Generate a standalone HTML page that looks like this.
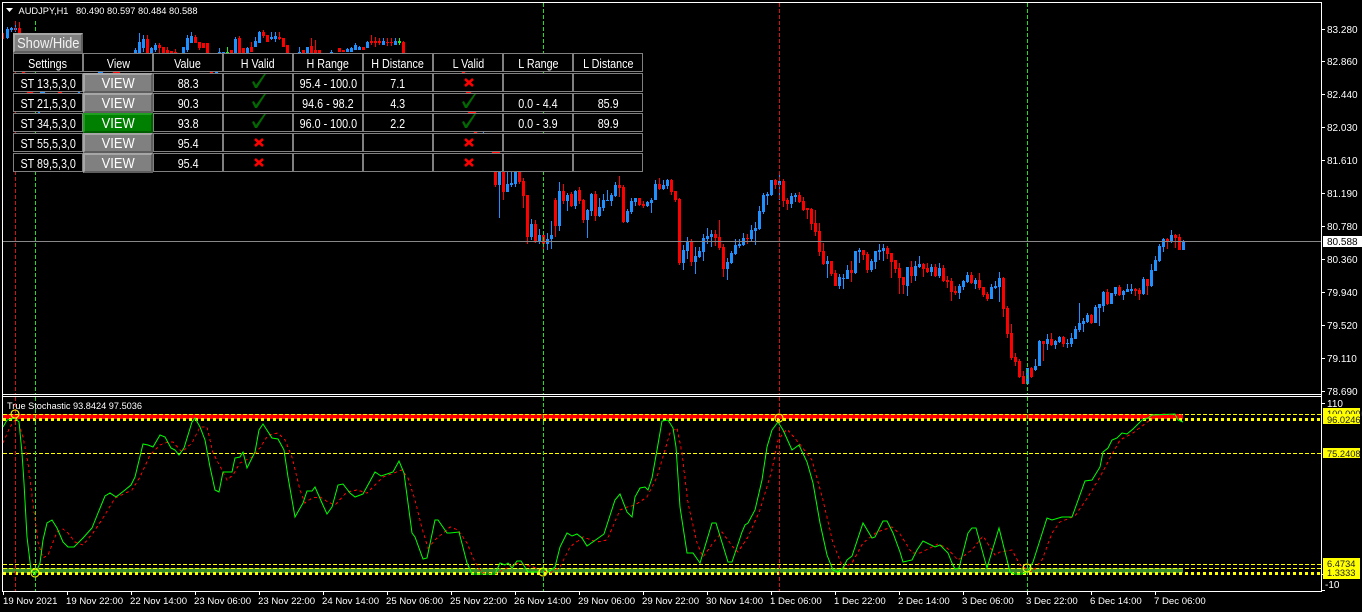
<!DOCTYPE html>
<html lang="en">
<head>
<meta charset="utf-8">
<title>AUDJPY,H1</title>
<style>
html,body{margin:0;padding:0;background:#000;}
body{width:1362px;height:612px;overflow:hidden;position:relative;font-family:"Liberation Sans",Arial,sans-serif;}
svg.chart{position:absolute;left:0;top:0;}
svg.chart text{font-family:"Liberation Sans",Arial,sans-serif;font-size:10px;fill:#fff;}
svg.chart text.y{font-size:9.3px;fill:#222;}
.tbl{position:absolute;left:13px;top:53px;display:grid;grid-template-columns:repeat(9,70px);grid-auto-rows:20px;}
.c{box-sizing:border-box;height:19px;border:1px solid #808080;background:#000;color:#fff;font-size:12.5px;line-height:21px;text-align:center;position:relative;white-space:nowrap;}
.c span,.b span,.sh span{display:inline-block;transform:scaleX(.86);transform-origin:50% 50%;margin:0 -12px;}
.b{box-sizing:border-box;height:20px;border:2px solid;border-color:#a6a6a6 #5e5e5e #5e5e5e #a6a6a6;background:#808080;color:#fff;font-size:15px;line-height:18px;text-align:center;white-space:nowrap;}
.b.g{background:#008000;border-color:#1f9f1f #005e00 #005e00 #1f9f1f;}
.sh{position:absolute;left:13px;top:33px;width:70px;height:20px;box-sizing:border-box;border:2px solid;border-color:#a6a6a6 #5e5e5e #5e5e5e #a6a6a6;background:#808080;color:#f2f2f2;font-size:15px;line-height:18px;text-align:center;white-space:nowrap;}
.c svg{position:absolute;left:0;top:0;}
</style>
</head>
<body>
<svg class="chart" width="1362" height="612" viewBox="0 0 1362 612" xmlns="http://www.w3.org/2000/svg">
<rect width="1362" height="612" fill="#000"/>

<!-- candles main -->
<g fill="none" shape-rendering="crispEdges">
<path stroke="#ff0000" stroke-width="1" d="M3.5 33V39M19.5 22V33M147.5 35V53M159.5 43V53M163.5 47V53M167.5 47V53M171.5 51V53M175.5 49V53M195.5 35V43M199.5 42V50M203.5 43V48M207.5 43V53M231.5 50V53M239.5 36V53M243.5 48V53M251.5 42V52M263.5 30V38M267.5 35V42M279.5 32V40M283.5 38V47M287.5 45V53M303.5 50V53M311.5 38V53M315.5 40V53M319.5 50V53M339.5 48V52M343.5 50V52M363.5 47V50M371.5 35V45M375.5 37V47M379.5 38V45M387.5 38V46M391.5 38V46M403.5 41V53
M495.5 172V187M503.5 172V200M519.5 172V184M523.5 178V208M527.5 195V244M535.5 220V243M543.5 233V252M555.5 198V237M563.5 184V204M571.5 192V207M579.5 187V204M583.5 199V223M595.5 191V221M619.5 176V197M623.5 185V223M639.5 198V206M643.5 201V208M659.5 178V190M671.5 179V195M675.5 191V202M679.5 198V265M691.5 239V266M715.5 230V246M719.5 220V250M723.5 244V277M747.5 234V244M775.5 179V189M783.5 179V207M787.5 198V210M799.5 192V203M803.5 197V211M807.5 208V219M811.5 208V230M815.5 210V236M819.5 223V256M823.5 243V265M831.5 261V276M835.5 270V286M851.5 261V282M863.5 250V260M867.5 252V273
M887.5 246V259M891.5 253V278M895.5 260V273M899.5 263V294M903.5 277V294M911.5 261V283M923.5 263V277M927.5 263V273M935.5 264V277M943.5 265V282M947.5 276V288M951.5 278V301M955.5 286V295M971.5 272V284M979.5 273V290M983.5 287V297M987.5 292V301M1003.5 277V317M1007.5 306V338M1011.5 324V360M1015.5 353V366M1019.5 359V378M1023.5 371V384M1031.5 367V378M1043.5 341V361M1051.5 333V346M1063.5 336V347M1091.5 314V324M1107.5 289V305M1119.5 285V296M1135.5 288V296M1139.5 288V300M1147.5 279V295M1167.5 238V249M1175.5 234V248M1179.5 234V250"/>
<path stroke="#ff0000" stroke-width="3" d="M19.5 28V33M147.5 39V53M159.5 45V48M163.5 47V53M167.5 50V53M171.5 51V53M175.5 52V53M195.5 37V43M199.5 42V48M203.5 43V48M207.5 43V53M231.5 50V53M239.5 38V53M243.5 48V53M251.5 47V52M263.5 32V36M267.5 35V42M279.5 37V39M283.5 38V47M287.5 45V53M303.5 50V53M311.5 46V53M315.5 50V53M319.5 50V53M339.5 48V52M343.5 50V52M363.5 47V50M371.5 41V43M375.5 41V43M379.5 41V43M387.5 42V43M391.5 42V43M403.5 42V53
M495.5 172V185M503.5 172V192M519.5 172V182M523.5 181V196M527.5 195V237M535.5 224V242M543.5 235V244M555.5 200V226M563.5 191V201M571.5 194V206M579.5 190V201M583.5 200V220M595.5 194V216M619.5 185V188M623.5 187V222M639.5 198V205M643.5 204V206M659.5 184V189M671.5 180V192M675.5 191V200M679.5 199V263M691.5 242V262M715.5 234V238M719.5 237V248M723.5 247V269M747.5 238V239M775.5 180V185M783.5 181V201M787.5 200V204M799.5 195V202M803.5 201V210M807.5 208V210M811.5 209V224M815.5 223V232M819.5 231V252M823.5 251V264M831.5 261V274M835.5 273V286M851.5 270V273M863.5 250V255M867.5 254V270
M887.5 248V254M891.5 253V262M895.5 260V269M899.5 268V278M903.5 277V285M911.5 267V276M923.5 264V269M927.5 268V272M935.5 267V276M943.5 268V281M947.5 280V282M951.5 281V292M955.5 291V293M971.5 275V283M979.5 280V288M983.5 287V295M987.5 294V299M1003.5 278V309M1007.5 308V334M1011.5 333V358M1015.5 357V362M1019.5 361V377M1023.5 376V384M1031.5 368V377M1043.5 341V344M1051.5 339V345M1063.5 337V344M1091.5 315V323M1107.5 292V304M1119.5 287V295M1135.5 289V291M1139.5 290V294M1147.5 279V286M1167.5 239V241M1175.5 235V238M1179.5 237V250"/>
<path stroke="#1e90ff" stroke-width="1" d="M7.5 27V39M11.5 27V32M15.5 22V32M135.5 48V53M139.5 33V53M143.5 35V52M151.5 47V53M155.5 43V52M183.5 47V53M187.5 35V52M191.5 32V43M219.5 48V53M223.5 52V53M235.5 37V53M247.5 47V53M255.5 37V47M259.5 31V43M271.5 32V40M275.5 32V42M299.5 47V53M307.5 47V53M331.5 50V53M347.5 48V52M351.5 47V52M355.5 43V50M359.5 46V50M367.5 41V48M383.5 38V45M395.5 38V45
M499.5 172V218M507.5 172V192M511.5 172V187M515.5 172V187M531.5 219V240M539.5 229V244M547.5 233V250M551.5 221V249M559.5 182V231M567.5 193V211M575.5 190V209M587.5 209V238M591.5 193V216M599.5 198V217M603.5 194V211M607.5 190V201M611.5 193V206M615.5 182V197M627.5 209V223M631.5 198V214M635.5 198V206M647.5 201V207M651.5 198V213M655.5 180V200M663.5 180V190M667.5 179V189M683.5 245V270M687.5 237V259M695.5 247V274M699.5 247V258M703.5 234V261M707.5 228V244M711.5 230V247M727.5 258V280M731.5 251V264M735.5 239V255M739.5 239V248M743.5 233V246M751.5 225V242M755.5 222V245M759.5 206V230M763.5 193V214M767.5 192V205M771.5 180V196M779.5 171V200M791.5 193V208M795.5 193V202M827.5 256V278M839.5 274V289M843.5 274V289M847.5 265V279M855.5 251V274M859.5 248V263M871.5 259V272M875.5 251V269
M879.5 244V260M883.5 244V261M907.5 267V296M915.5 261V281M919.5 256V268M931.5 264V276M939.5 263V278M959.5 284V299M963.5 280V290M967.5 272V283M975.5 278V289M991.5 284V299M995.5 281V289M999.5 272V302M1027.5 368V385M1035.5 359V371M1039.5 340V366M1047.5 334V350M1055.5 340V349M1059.5 336V343M1067.5 339V348M1071.5 333V347M1075.5 326V339M1079.5 303V332M1083.5 318V332M1087.5 313V323M1095.5 305V323M1099.5 304V326M1103.5 291V312M1111.5 293V304M1115.5 287V296M1123.5 290V300M1127.5 284V292M1131.5 284V294M1143.5 277V295M1151.5 264V287M1155.5 256V271M1159.5 244V262M1163.5 238V252M1171.5 230V243M1183.5 240V250"/>
<path stroke="#1e90ff" stroke-width="3" d="M7.5 29V38M11.5 28V30M15.5 28V30M135.5 50V53M139.5 42V53M143.5 39V48M151.5 48V53M155.5 45V50M183.5 47V53M187.5 38V50M191.5 36V43M219.5 52V53M223.5 52V53M235.5 39V53M247.5 48V53M255.5 41V47M259.5 32V43M271.5 37V39M275.5 36V39M299.5 52V53M307.5 47V53M331.5 52V53M347.5 49V52M351.5 48V52M355.5 45V50M359.5 47V50M367.5 42V48M383.5 41V45M395.5 41V45
M499.5 172V185M507.5 184V192M511.5 183V185M515.5 172V184M531.5 224V237M539.5 235V242M547.5 239V244M551.5 235V239M559.5 191V226M567.5 195V201M575.5 191V206M587.5 210V220M591.5 194V211M599.5 207V216M603.5 200V208M607.5 200V201M611.5 195V201M615.5 185V196M627.5 211V222M631.5 201V212M635.5 198V202M647.5 202V206M651.5 200V203M655.5 184V200M663.5 185V189M667.5 180V186M683.5 250V263M687.5 241V251M695.5 256V262M699.5 251V257M703.5 238V252M707.5 236V239M711.5 234V237M727.5 262V269M731.5 253V263M735.5 245V254M739.5 244V246M743.5 238V245M751.5 230V239M755.5 228V231M759.5 211V229M763.5 195V212M767.5 194V196M771.5 180V195M779.5 181V185M791.5 196V204M795.5 195V197M827.5 261V264M839.5 277V286M843.5 278V279M847.5 270V279M855.5 251V273M859.5 250V252M871.5 261V270M875.5 251V262
M879.5 250V252M883.5 248V251M907.5 267V286M915.5 266V276M919.5 264V267M931.5 267V272M939.5 268V276M959.5 286V293M963.5 281V287M967.5 275V282M975.5 280V284M991.5 287V299M995.5 286V288M999.5 278V287M1027.5 368V384M1035.5 366V370M1039.5 341V366M1047.5 339V344M1055.5 341V345M1059.5 337V342M1067.5 343V344M1071.5 338V344M1075.5 329V339M1079.5 323V330M1083.5 321V324M1087.5 315V322M1095.5 307V323M1099.5 304V308M1103.5 292V306M1111.5 293V304M1115.5 287V294M1123.5 291V295M1127.5 289V292M1131.5 289V291M1143.5 279V294M1151.5 270V286M1155.5 260V271M1159.5 246V261M1163.5 239V247M1171.5 235V242M1183.5 242V250"/>
<path stroke="#22ee22" stroke-width="1" d="M227.5 47V53M399.5 38V45"/>
<path stroke="#22ee22" stroke-width="3" d="M227.5 52V53M399.5 41V43"/>
<!-- peeks between table rows -->
<path stroke="#ff0000" stroke-width="1" d="M22 72.5H25M113 72.5H120M210 72.5H213M462 72.5H465M27 92.5H33M58 92.5H62M466 92.5H471M468 112.5H476M474 132.5H477M492 152.5H500"/>
<path stroke="#1e90ff" stroke-width="1" d="M98 72.5H103M215 72.5H218M40 92.5H45M78 92.5H80M38 112.5H40M483 132.5H484"/>
</g>

<!-- current price line -->
<rect x="3" y="241" width="1318" height="1" fill="#888"/>

<!-- title background -->
<rect x="3" y="3" width="200" height="18" fill="#000"/>
<path d="M6 8H13L9.5 12Z" fill="#fff"/>
<text x="18.5" y="14" style="font-size:9.3px;letter-spacing:0">AUDJPY,H1</text>
<text x="76" y="14" style="font-size:9.3px">80.490 80.597 80.484 80.588</text>

<!-- sub-window bands -->
<g shape-rendering="crispEdges">
<rect x="3" y="414" width="1180" height="5" fill="#ff0000"/>
<rect x="3" y="568" width="1180" height="5" fill="#3a8c2a"/>
<g fill="none" stroke="#ffff00">
<path stroke-width="1" stroke-dasharray="4 2" d="M3 414.5H1321M3 453.5H1321M3 564.5H1321M3 568.5H1321"/>
<path stroke-width="3" stroke-dasharray="3 3" d="M3 419.5H1321M3 573.5H1321"/>
</g>
</g>

<!-- vertical dashed lines -->
<g fill="none" stroke-width="1" stroke-dasharray="4 2" shape-rendering="crispEdges">
<path stroke="#d81010" d="M15.5 21V394M15.5 397V591M779.5 3V394M779.5 397V591"/>
<path stroke="#22dd22" d="M35.5 21V394M35.5 397V591M543.5 3V394M543.5 397V591M1027.5 3V394M1027.5 397V591"/>
</g>

<!-- signal line -->
<polyline fill="none" stroke="#ff0000" stroke-width="1" stroke-dasharray="3 3" shape-rendering="crispEdges" points="3,443 10,427 17,417 23,437 28,463 33,503 38,542 43,558 48,555 57,532 63,529 68,533 75,542 83,545 93,533 103,518 115,498 132,490 140,477 150,455 160,445 168,442 173,442 182,452 192,443 200,427 207,427 213,453 222,470 227,480 233,475 240,463 252,457 260,448 268,435 278,433 285,440 292,457 300,490 305,503 312,498 320,497 328,502 335,505 347,492 357,490 367,493 383,477 402,470 408,478 415,500 422,528 428,548 437,538 447,530 450,527 458,530 467,543 475,562 482,573 495,574 507,568 518,563 533,567 550,573 560,567 570,547 583,537 597,542 607,540 620,510 627,507 635,505 647,497 657,477 665,450 670,433 677,428 682,453 688,503 697,543 703,557 713,543 722,532 733,547 738,552 748,537 760,510 772,470 778,440 787,429 798,442 812,460 823,500 833,543 843,568 852,563 863,543 877,532 892,527 900,534 912,553 920,553 938,544 947,548 958,560 972,550 983,536 995,555 1000,552 1012,550 1020,565 1032,572 1042,560 1052,533 1060,522 1075,516 1088,497 1100,477 1110,458 1120,440 1133,433 1150,420 1163,414 1182,415"/>

<!-- main line -->
<polyline fill="none" stroke="#00ff00" stroke-width="1" points="3,427 7,420 15,418 19,422 22,453 24,483 27,537 31,570 35,575 40,563 43,540 47,523 52,520 57,528 63,542 68,547 74,547 83,538 92,528 98,513 105,496 110,493 116,497 125,490 131,485 135,477 143,444 148,445 153,447 160,435 165,437 171,448 175,450 179,455 184,448 192,422 195,418 200,427 205,440 210,467 215,490 219,492 223,472 232,472 235,458 240,457 243,452 247,468 255,452 259,430 263,424 272,438 278,439 284,450 288,477 295,517 303,503 307,491 312,491 315,487 322,503 327,514 332,507 338,485 343,484 350,493 355,497 363,494 375,472 381,476 390,473 393,472 399,461 404,473 412,533 415,537 423,559 427,558 435,520 438,520 447,533 450,533 459,532 467,563 472,574 495,574 500,563 505,565 508,563 512,568 517,561 521,561 528,572 537,572 543,568 548,572 555,567 560,547 567,533 572,536 577,534 582,538 587,546 597,539 604,534 615,500 620,494 627,512 632,517 635,497 640,488 645,487 648,490 652,478 657,450 662,421 668,420 673,428 676,447 680,507 687,553 693,553 700,563 712,523 716,523 728,562 732,562 742,532 745,525 748,523 755,510 762,480 767,447 772,430 778,422 783,430 792,450 799,445 807,462 813,483 820,523 827,555 833,570 838,572 843,568 847,560 852,556 863,523 872,538 875,537 883,521 887,521 893,533 900,552 903,562 912,560 917,550 923,541 935,547 940,545 948,553 952,563 955,569 959,568 968,533 972,528 976,528 987,568 999,528 1010,572 1015,574 1022,574 1027,572 1033,562 1040,540 1047,518 1052,520 1062,517 1072,517 1085,481 1092,480 1100,467 1103,452 1108,448 1112,440 1117,438 1122,433 1127,434 1133,429 1142,420 1148,418 1152,415 1175,414 1178,420 1183,422"/>

<!-- circles -->
<g fill="none" stroke="#ffff00" stroke-width="1.1">
<circle cx="15" cy="414" r="4"/>
<circle cx="35" cy="573" r="4"/>
<circle cx="543" cy="572" r="4"/>
<circle cx="779" cy="418" r="4"/>
<circle cx="1027" cy="568" r="4"/>
</g>

<!-- frames -->
<g fill="#fff" shape-rendering="crispEdges">
<rect x="2" y="2" width="1320" height="1"/>
<rect x="2" y="2" width="1" height="590"/>
<rect x="1321" y="2" width="1" height="590"/>
<rect x="2" y="394" width="1320" height="1"/>
<rect x="2" y="396" width="1320" height="1"/>
<rect x="2" y="591" width="1320" height="1"/>
<!-- price ticks -->
<path d="M1322 29h3v1h-3zM1322 61h3v1h-3zM1322 94h3v1h-3zM1322 127h3v1h-3zM1322 160h3v1h-3zM1322 193h3v1h-3zM1322 226h3v1h-3zM1322 259h3v1h-3zM1322 292h3v1h-3zM1322 325h3v1h-3zM1322 358h3v1h-3zM1322 391h3v1h-3zM1322 403h3v1h-3zM1322 574h2v1h-2zM1322 590h3v1h-3z"/>
<!-- time ticks -->
<path d="M3 592h1v3h-1zM67 592h1v3h-1zM131 592h1v3h-1zM195 592h1v3h-1zM259 592h1v3h-1zM323 592h1v3h-1zM387 592h1v3h-1zM451 592h1v3h-1zM515 592h1v3h-1zM579 592h1v3h-1zM643 592h1v3h-1zM707 592h1v3h-1zM771 592h1v3h-1zM835 592h1v3h-1zM899 592h1v3h-1zM963 592h1v3h-1zM1027 592h1v3h-1zM1091 592h1v3h-1zM1155 592h1v3h-1z"/>
</g>

<!-- price axis -->
<text x="1327" y="33">83.280</text>
<text x="1327" y="65">82.860</text>
<text x="1327" y="98">82.440</text>
<text x="1327" y="131">82.030</text>
<text x="1327" y="164">81.610</text>
<text x="1327" y="197">81.190</text>
<text x="1327" y="230">80.780</text>
<rect x="1323" y="236" width="39" height="11" fill="#fff"/>
<text x="1327" y="245" style="fill:#000">80.588</text>
<text x="1327" y="263">80.360</text>
<text x="1327" y="296">79.940</text>
<text x="1327" y="329">79.520</text>
<text x="1327" y="362">79.110</text>
<text x="1327" y="395">78.690</text>

<!-- sub axis -->
<text x="1327" y="407">110</text>
<rect x="1323" y="408" width="37" height="6" fill="#ffff00"/>
<text class="y" x="1327" y="417">100.0000</text>
<rect x="1323" y="414" width="37" height="10" fill="#ffff00"/>
<text class="y" x="1327" y="423">96.0246</text>
<rect x="1323" y="448" width="37" height="10" fill="#ffff00"/>
<text class="y" x="1327" y="457">75.2408</text>
<rect x="1323" y="558" width="37" height="10" fill="#ffff00"/>
<text class="y" x="1327" y="567">6.4734</text>
<rect x="1323" y="568" width="37" height="11" fill="#ffff00"/>
<text class="y" x="1327" y="576">1.3333</text>
<text x="1325" y="588">-10</text>

<text x="7" y="409" style="font-size:9.2px">True Stochastic 93.8424 97.5036</text>

<!-- time axis -->
<g>
<text x="3" y="604" style="font-size:9.6px">19 Nov 2021</text>
<text x="66" y="604" style="font-size:9.6px">19 Nov 22:00</text>
<text x="130" y="604" style="font-size:9.6px">22 Nov 14:00</text>
<text x="194" y="604" style="font-size:9.6px">23 Nov 06:00</text>
<text x="258" y="604" style="font-size:9.6px">23 Nov 22:00</text>
<text x="322" y="604" style="font-size:9.6px">24 Nov 14:00</text>
<text x="386" y="604" style="font-size:9.6px">25 Nov 06:00</text>
<text x="450" y="604" style="font-size:9.6px">25 Nov 22:00</text>
<text x="514" y="604" style="font-size:9.6px">26 Nov 14:00</text>
<text x="578" y="604" style="font-size:9.6px">29 Nov 06:00</text>
<text x="642" y="604" style="font-size:9.6px">29 Nov 22:00</text>
<text x="706" y="604" style="font-size:9.6px">30 Nov 14:00</text>
<text x="770" y="604" style="font-size:9.6px">1 Dec 06:00</text>
<text x="834" y="604" style="font-size:9.6px">1 Dec 22:00</text>
<text x="898" y="604" style="font-size:9.6px">2 Dec 14:00</text>
<text x="962" y="604" style="font-size:9.6px">3 Dec 06:00</text>
<text x="1026" y="604" style="font-size:9.6px">3 Dec 22:00</text>
<text x="1090" y="604" style="font-size:9.6px">6 Dec 14:00</text>
<text x="1154" y="604" style="font-size:9.6px">7 Dec 06:00</text>
</g>
</svg>

<div class="sh"><span>Show/Hide</span></div>

<div class="tbl">
<div class="c"><span>Settings</span></div><div class="c"><span>View</span></div><div class="c"><span>Value</span></div><div class="c"><span>H Valid</span></div><div class="c"><span>H Range</span></div><div class="c"><span>H Distance</span></div><div class="c"><span>L Valid</span></div><div class="c"><span>L Range</span></div><div class="c"><span>L Distance</span></div>

<div class="c"><span>ST 13,5,3,0</span></div><div class="b"><span>VIEW</span></div><div class="c"><span>88.3</span></div>
<div class="c"><svg width="68" height="17"><path fill="#006a00" d="M28 8L30 7L32 11L40 0H42L33 14H31Z"/></svg></div>
<div class="c"><span>95.4 - 100.0</span></div><div class="c"><span>7.1</span></div>
<div class="c"><svg width="68" height="17"><path fill="none" stroke="#ff0000" stroke-width="2.6" d="M31 5L39 12M39 5L31 12"/></svg></div>
<div class="c"></div><div class="c"></div>

<div class="c"><span>ST 21,5,3,0</span></div><div class="b"><span>VIEW</span></div><div class="c"><span>90.3</span></div>
<div class="c"><svg width="68" height="17"><path fill="#006a00" d="M28 8L30 7L32 11L40 0H42L33 14H31Z"/></svg></div>
<div class="c"><span>94.6 - 98.2</span></div><div class="c"><span>4.3</span></div>
<div class="c"><svg width="68" height="17"><path fill="#006a00" d="M28 8L30 7L32 11L40 0H42L33 14H31Z"/></svg></div>
<div class="c"><span>0.0 - 4.4</span></div><div class="c"><span>85.9</span></div>

<div class="c"><span>ST 34,5,3,0</span></div><div class="b g"><span>VIEW</span></div><div class="c"><span>93.8</span></div>
<div class="c"><svg width="68" height="17"><path fill="#006a00" d="M28 8L30 7L32 11L40 0H42L33 14H31Z"/></svg></div>
<div class="c"><span>96.0 - 100.0</span></div><div class="c"><span>2.2</span></div>
<div class="c"><svg width="68" height="17"><path fill="#006a00" d="M28 8L30 7L32 11L40 0H42L33 14H31Z"/></svg></div>
<div class="c"><span>0.0 - 3.9</span></div><div class="c"><span>89.9</span></div>

<div class="c"><span>ST 55,5,3,0</span></div><div class="b"><span>VIEW</span></div><div class="c"><span>95.4</span></div>
<div class="c"><svg width="68" height="17"><path fill="none" stroke="#ff0000" stroke-width="2.6" d="M31 5L39 12M39 5L31 12"/></svg></div>
<div class="c"></div><div class="c"></div>
<div class="c"><svg width="68" height="17"><path fill="none" stroke="#ff0000" stroke-width="2.6" d="M31 5L39 12M39 5L31 12"/></svg></div>
<div class="c"></div><div class="c"></div>

<div class="c"><span>ST 89,5,3,0</span></div><div class="b"><span>VIEW</span></div><div class="c"><span>95.4</span></div>
<div class="c"><svg width="68" height="17"><path fill="none" stroke="#ff0000" stroke-width="2.6" d="M31 5L39 12M39 5L31 12"/></svg></div>
<div class="c"></div><div class="c"></div>
<div class="c"><svg width="68" height="17"><path fill="none" stroke="#ff0000" stroke-width="2.6" d="M31 5L39 12M39 5L31 12"/></svg></div>
<div class="c"></div><div class="c"></div>
</div>
</body>
</html>
